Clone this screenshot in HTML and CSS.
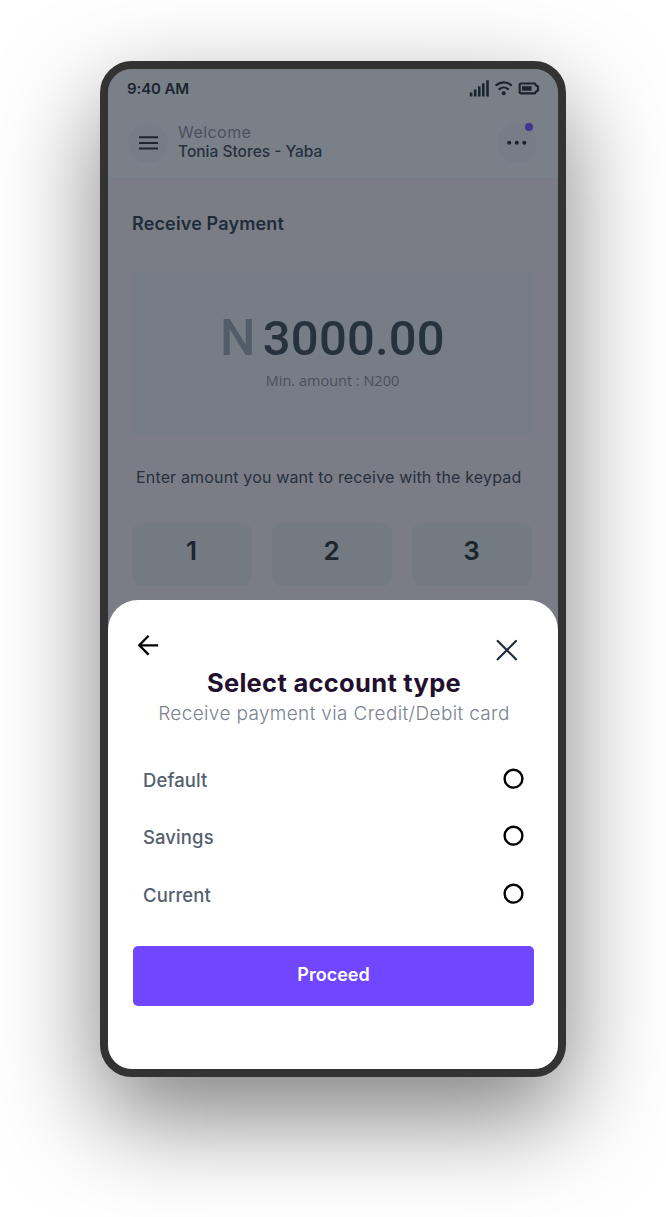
FILE: index.html
```
<!DOCTYPE html>
<html lang="en">
<head>
<meta charset="utf-8">
<title>Receive Payment</title>
<link rel="stylesheet" href="styles.css">
</head>
<body>
<div class="phone">
  <div class="backdrop">
    <header class="top">
      <div class="status">
        <span class="clock">9:40 AM</span>
        <svg class="status-icons" width="72" height="20" viewBox="0 0 72 20">
          <path d="M.8 13.600h2.600v4H.8zM4.900 10.500h2.600v7.100H4.900zM9 7.300h2.600v10.300H9zM13 4.300h2.600v13.300H13zM17.200 1.300h2.600v16.300h-2.600z"/>
          <g fill="none" stroke="#1b2431" stroke-width="2.200" stroke-linecap="round">
            <path d="M27.300 6.100a11.200 11.200 0 0 1 14.800 0M30.300 10.100a6.800 6.800 0 0 1 8.800 0"/>
            <path stroke-linejoin="round" d="M52 4.500h14l.9 1.700 2.100 1.300v3.900l-2.100 1.300-.9 1.700H52a1.300 1.300 0 0 1-1.300-1.300V5.800A1.300 1.300 0 0 1 52 4.500z"/>
          </g>
          <circle cx="34.700" cy="14.300" r="2"/>
          <rect x="53" y="7.200" width="9.600" height="4.500"/>
        </svg>
      </div>
      <div class="account">
        <div class="round">
          <svg width="20" height="14" viewBox="0 0 20 14"><path d="M1 1.200h19M1 6.900h19M1 12.400h19" stroke="#1d2530" stroke-width="2"/></svg>
        </div>
        <div class="names">
          <div class="welcome">Welcome</div>
          <div class="store">Tonia Stores - Yaba</div>
        </div>
        <div class="round more">
          <svg width="20" height="6" viewBox="0 0 20 6"><circle cx="2.200" cy="2.700" r="2"/><circle cx="9.800" cy="2.700" r="2"/><circle cx="17.300" cy="2.700" r="2"/></svg>
          <i class="badge"></i>
        </div>
      </div>
    </header>
    <main class="main">
      <h1 class="title">Receive Payment</h1>
      <section class="card">
        <div class="amount"><span class="cur">N</span><span class="num">3000.00</span></div>
        <div class="min">Min. amount : N200</div>
      </section>
      <p class="hint">Enter amount you want to receive with the keypad</p>
      <div class="keys"><div class="key">1</div><div class="key">2</div><div class="key">3</div></div>
    </main>
  </div>
  <section class="sheet">
    <div class="nav">
      <svg class="back" width="22" height="22" viewBox="0 0 22 22"><path d="M21.200 11.300H2.500M11.600 1.700 2.300 11.300l9.300 9.300" fill="none" stroke="#000" stroke-width="2.300"/></svg>
      <svg class="close" width="22" height="22" viewBox="0 0 22 22"><path d="M1.700 2 20 20.300M20 2 1.700 20.300" stroke="#202c3b" stroke-width="2.200" stroke-linecap="round"/></svg>
    </div>
    <h2 class="heading">Select account type</h2>
    <p class="sub">Receive payment via Credit/Debit card</p>
    <div class="options">
      <div class="option"><span>Default</span><svg width="22" height="22" viewBox="0 0 22 22"><circle class="radio" cx="10.500" cy="10.700" r="8.900"/></svg></div>
      <div class="option"><span>Savings</span><svg width="22" height="22" viewBox="0 0 22 22"><circle class="radio" cx="10.500" cy="10.700" r="8.900"/></svg></div>
      <div class="option"><span>Current</span><svg width="22" height="22" viewBox="0 0 22 22"><circle class="radio" cx="10.500" cy="10.700" r="8.900"/></svg></div>
    </div>
    <button class="proceed">Proceed</button>
  </section>
</div>
</body>
</html>
```
FILE: styles.css
```
* { box-sizing: border-box; }
body { margin: 0; min-height: 1217px; padding: 61px 100px 0; background: #fff; font-family: Inter, "Liberation Sans", sans-serif; }
h1, h2, p { margin: 0; }
svg { display: block; flex: none; }
.phone { position: relative; width: 466px; height: 1016px; border: 8px solid #333; border-radius: 32px; overflow: hidden; background: #7b7d86; box-shadow: 0 40px 100px rgba(0,0,0,.5); }
.backdrop { height: 560px; }
.top { height: 110px; background: #798087; border-bottom: 1px solid #757b87; }
.status { height: 40px; padding: 9px 17px 0 19px; display: flex; justify-content: space-between; }
.clock { font-size: 15px; font-weight: 600; line-height: 22px; letter-spacing: -.1px; color: #1b2431; }
.status-icons { margin-top: 1px; fill: #1b2431; }
.account { display: flex; align-items: center; height: 68px; padding: 0 21px 0 20px; }
.round { position: relative; width: 40px; height: 40px; border-radius: 50%; background: #777d87; display: flex; align-items: center; justify-content: center; fill: #1d2530; }
.badge { position: absolute; right: 4px; top: 0; width: 8px; height: 8px; border-radius: 50%; background: #42358f; }
.names { flex: 1; padding: 0 0 3px 10px; line-height: 20px; }
.welcome { font-size: 16px; letter-spacing: .45px; color: #4a5060; }
.store { font-size: 15.500px; font-weight: 500; color: #263040; }
.main { padding: 33px 24px 0; }
.title { font-size: 18px; font-weight: 600; line-height: 24px; letter-spacing: .15px; color: #202c3a; }
.card { margin-top: 36px; height: 163px; width: 401px; background: #767d86; padding-top: 37px; text-align: center; }
.amount { font: 500 49px/58px Roboto, sans-serif; letter-spacing: .2px; color: #27323f; }
.cur { font-size: 50px; color: #535d69; margin-right: 7px; }
.min { font: 14.500px/22px "Open Sans", sans-serif; margin-top: 2px; letter-spacing: 0; color: #4a5060; }
.hint { margin-top: 30px; padding-left: 4px; font-size: 16px; line-height: 24px; letter-spacing: .16px; white-space: nowrap; color: #263040; }
.keys { display: grid; grid-template-columns: repeat(3, 120px); gap: 20px; margin-top: 34px; }
.key { height: 63px; border-radius: 10px; background: #737a81; font-size: 26px; font-weight: 600; line-height: 56px; padding-right: 1px; text-align: center; color: #1c252e; }
.sheet { position: absolute; left: 0; right: 0; bottom: 0; height: 469px; border-radius: 30px 30px 0 0; background: #fff; padding: 34px 23px 0 25px; }
.nav { display: flex; justify-content: space-between; padding: 0 17px 0 4px; height: 32px; }
.close { margin-top: 5px; }
.heading { font-size: 25.500px; font-weight: 650; line-height: 33px; letter-spacing: .3px; text-align: center; color: #23102f; }
.sub { font-size: 19px; font-weight: 300; line-height: 29px; letter-spacing: .35px; text-align: center; white-space: nowrap; color: #7b8291; }
.options { padding: 22px 10px 0; }
.option { height: 57.500px; display: flex; justify-content: space-between; align-items: center; font-size: 18.500px; font-weight: 500; letter-spacing: .1px; color: #556070; }
.option span { padding-top: 2px; }
.radio { fill: none; stroke: #000; stroke-width: 2.400; }
.proceed { display: block; width: 401px; height: 60px; border: 0; border-radius: 5px; background: #7047ff; color: #fff; font: 600 18px/24px Inter, sans-serif; margin-top: 23px; padding: 0 0 1px; }
```
